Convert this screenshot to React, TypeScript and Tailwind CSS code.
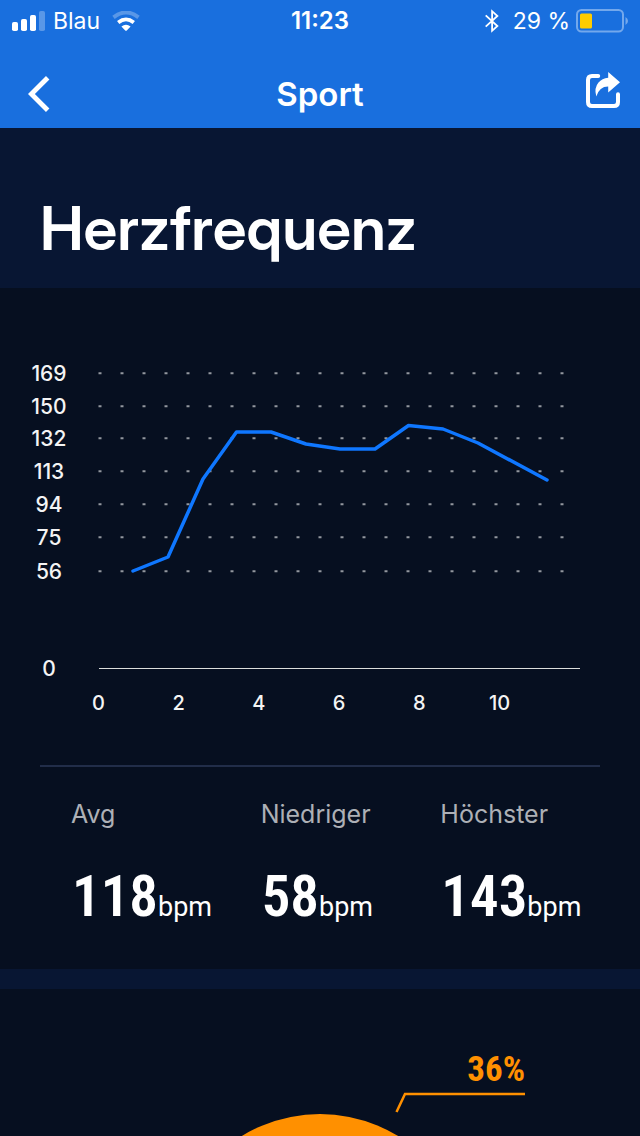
const levels = [
  { label: '169', y: 373 },
  { label: '150', y: 406 },
  { label: '132', y: 438 },
  { label: '113', y: 471 },
  { label: '94', y: 504 },
  { label: '75', y: 537 },
  { label: '56', y: 571 },
];

const minutes = [0, 2, 4, 6, 8, 10];

const heartRate =
  '133,571 168,557 203,479 236.5,432 271,432 306,444 340,449 375,449 408.5,425.5 443,429 478,443 547,480';

const stats = [
  { name: 'Avg', value: '118' },
  { name: 'Niedriger', value: '58' },
  { name: 'Höchster', value: '143' },
];

function StatusBar() {
  return (
    <div className="grid h-10 grid-cols-3 items-center px-3 pt-px text-[23px] leading-7">
      <div className="flex items-center">
        <svg viewBox="0 0 34 20" className="mr-[7px] h-5 w-[34px]" fill="#fff" aria-hidden="true">
          <rect x="0" y="11" width="6" height="9" rx="1.8" />
          <rect x="9" y="8" width="6" height="12" rx="1.8" />
          <rect x="18" y="4" width="6" height="16" rx="1.8" />
          <rect x="27" y="0" width="6" height="20" rx="1.8" opacity="0.28" />
        </svg>
        <span>Blau</span>
        <svg viewBox="0 0 28 20" className="ml-3 h-5 w-7" fill="none" aria-hidden="true">
          <path d="M1.5 6.300Q14 -3.300 26.500 6.300" stroke="#fff" strokeWidth="4" opacity="0.28" />
          <path d="M6.200 11.400Q14 5.400 21.800 11.400" stroke="#fff" strokeWidth="3.800" />
          <path d="M9.400 15.600Q14 12 18.600 15.600L14.800 19.400Q14 20.200 13.200 19.400Z" fill="#fff" />
        </svg>
      </div>
      <div className="text-center text-[24px] font-semibold">11:23</div>
      <div className="flex items-center justify-end">
        <svg viewBox="0 0 14 24" className="mr-[14px] h-6 w-[14px]" fill="none" stroke="#fff" strokeWidth="1.8" aria-hidden="true">
          <path d="M.7 6.3 12.4 17 7.100 21.800V2.200L12.400 7 .7 17.700" />
        </svg>
        <span className="whitespace-nowrap">29 %</span>
        <svg viewBox="0 0 52 24" className="ml-[6px] h-6 w-[52px] shrink-0" aria-hidden="true">
          <rect x="1" y="1" width="46" height="21.500" rx="4.500" fill="none" stroke="#73a8ec" strokeWidth="2" />
          <rect x="4" y="4.500" width="12" height="15" rx="1.500" fill="#ffcc00" />
          <path d="M49.500 8Q52 9.500 52 12T49.500 16Z" fill="#73a8ec" />
        </svg>
      </div>
    </div>
  );
}

function NavBar() {
  return (
    <div className="grid h-[88px] grid-cols-[1fr_auto_1fr] items-center px-5 pt-5">
      <button type="button" aria-label="Zurück" className="ml-2 h-9 w-[22px]">
        <svg viewBox="0 0 22 36" className="h-9 w-[22px]" fill="none" stroke="#fff" strokeWidth="4.900" aria-hidden="true">
          <path d="M19.700 1.800 3.400 18 19.700 34.200" />
        </svg>
      </button>
      <h1 className="text-[33px] font-semibold leading-10">Sport</h1>
      <button type="button" aria-label="Teilen" className="mb-2 h-[38px] w-9 justify-self-end">
        <svg viewBox="0 0 36 38" className="h-[38px] w-9" fill="none" aria-hidden="true">
          <path
            d="M14.200 5H8Q4 5 4 9V31Q4 35 8 35H30Q34 35 34 31V23.200"
            stroke="#fff"
            strokeWidth="4"
            strokeLinecap="round"
          />
          <path d="M24.200 1 36 11.200 24.200 21.400V15.600Q15.500 15.500 12.300 25.500Q9.800 17 14.500 11.500Q18 7.500 24.200 6.800Z" fill="#fff" />
        </svg>
      </button>
    </div>
  );
}

function HeartRateChart() {
  return (
    <svg
      viewBox="0 288 640 477"
      className="block h-auto w-full font-medium"
      role="img"
      aria-label="Herzfrequenz"
    >
      <g fill="#f4f4f4" fontSize="21" textAnchor="middle">
        {levels.map((l) => (
          <text key={l.label} x="49" y={l.y + 8}>
            {l.label}
          </text>
        ))}
        <text x="49" y="676">0</text>
      </g>
      <g stroke="#92979e" strokeWidth="2" strokeDasharray="3 19">
        {levels.map((l) => (
          <path key={l.label} d={`M98.500 ${l.y + 0.3}H563.500`} />
        ))}
      </g>
      <path d="M99 668.500H580" stroke="#dcdedc" />
      <g fill="#f4f4f4" fontSize="20" textAnchor="middle">
        {minutes.map((m) => (
          <text key={m} x={98.5 + m * 40.1} y="710">
            {m}
          </text>
        ))}
      </g>
      <polyline
        points={heartRate}
        fill="none"
        stroke="#0f77ff"
        strokeWidth="3.500"
        strokeLinecap="round"
        strokeLinejoin="round"
      />
    </svg>
  );
}

export default function App() {
  return (
    <div className="min-h-screen bg-[#060f20] font-['Inter',sans-serif] text-white">
      <header className="bg-[#196fde]">
        <StatusBar />
        <NavBar />
      </header>
      <main>
        <div className="bg-[#081633] px-10 pb-[21px] pt-[61px]">
          <h2 className="font-['Inter_Display','Inter_Tight','Inter',sans-serif] text-[61px] font-semibold leading-[78px]">
            Herzfrequenz
          </h2>
        </div>
        <section>
          <HeartRateChart />
          <div className="mx-10 h-[2px] bg-[#212d49]" />
          <dl className="grid grid-cols-[190fr_180fr_200fr] pb-[27px] pl-[71px] pt-[31px]">
            {stats.map((s) => (
              <div key={s.name}>
                <dt className="text-[25px] leading-8 text-[#adb0b6]">{s.name}</dt>
                <dd className="mt-8 whitespace-nowrap pl-px font-['Roboto_Condensed','Roboto',sans-serif] text-[57px] font-semibold leading-[70px]">
                  {s.value}
                  <span className="font-['Roboto',sans-serif] text-[27px] font-normal">bpm</span>
                </dd>
              </div>
            ))}
          </dl>
        </section>
        <div className="h-5 bg-[#081633]" />
        <section>
          <svg viewBox="0 989 640 147" className="block h-auto w-full" role="img" aria-label="36%">
            <circle cx="320" cy="1264" r="150" fill="#ff9000" />
            <path d="M396.500 1112 405 1094H525" fill="none" stroke="#ff9000" strokeWidth="2.500" />
            <text
              x="525"
              y="1081"
              textAnchor="end"
              fill="#ff9000"
              className="font-['Roboto_Condensed','Liberation_Sans_Narrow',sans-serif] text-[35px] font-bold"
            >
              36%
            </text>
          </svg>
        </section>
      </main>
    </div>
  );
}
